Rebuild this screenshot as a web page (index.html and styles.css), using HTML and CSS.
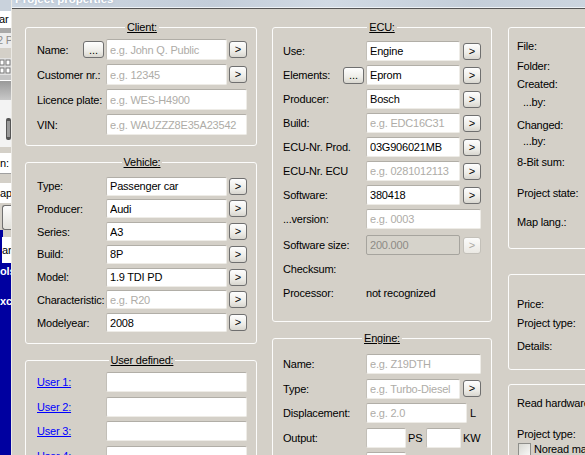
FILE: index.html
```html
<!DOCTYPE html>
<html>
<head>
	<meta charset="utf-8">
	<title>Project properties</title>
	<link rel="stylesheet" href="styles.css">
</head>
<body>

<div class="behind">
	<div class="bh-top"></div>
	<div class="bh-white bh-ar">ar</div>
	<div class="bh-line"></div>
	<div class="bh-light">2 P</div>
	<div class="bh-gap"></div>
	<div class="bh-icons">
		<svg width="11" height="17" viewBox="0 0 11 17">
			<rect x="0" y="2" width="4" height="5" fill="#fff" stroke="#777" stroke-width="1"/>
			<rect x="6" y="2" width="4" height="5" fill="#fff" stroke="#777" stroke-width="1"/>
			<rect x="0" y="10" width="4" height="5" fill="#fff" stroke="#777" stroke-width="1"/>
			<rect x="6" y="10" width="4" height="5" fill="#fff" stroke="#777" stroke-width="1"/>
		</svg>
	</div>
	<div class="bh-lines"></div>
	<div class="bh-dark"></div>
	<div class="bh-panel">
		<svg width="11" height="47" viewBox="0 0 11 47">
			<rect x="6" y="18" width="5" height="22" rx="2" fill="#555"/>
			<rect x="7" y="21" width="3" height="16" fill="#999"/>
		</svg>
	</div>
	<div class="bh-gap2"></div>
	<div class="bh-white bh-n">n:</div>
	<div class="bh-sep"></div>
	<div class="bh-white bh-ap">ap</div>
	<div class="bh-gap3"></div>
	<div class="bh-button"><div class="bh-btn"></div></div>
	<div class="bh-gap4"></div>
	<div class="bh-white bh-am">am</div>
	<div class="bh-blue"><b>ols</b><b class="bh-xc">xc</b></div>
</div>

<div class="dialog">
	<div class="titlebar"><span>Project properties</span></div>

	<div class="body">

		<div class="col col-left">
			<fieldset class="group client">
				<legend>Client:</legend>
				<div class="rows">
					<div class="row">
						<label>Name:</label>
						<button class="dots">...</button>
						<input class="short" placeholder="e.g. John Q. Public">
						<button class="pick">&gt;</button>
					</div>
					<div class="row">
						<label>Customer nr.:</label>
						<input class="short" placeholder="e.g. 12345">
						<button class="pick">&gt;</button>
					</div>
					<div class="row">
						<label>Licence plate:</label>
						<input class="wide" placeholder="e.g. WES-H4900">
					</div>
					<div class="row">
						<label>VIN:</label>
						<input class="wide" placeholder="e.g. WAUZZZ8E35A23542">
					</div>
				</div>
			</fieldset>

			<fieldset class="group vehicle">
				<legend>Vehicle:</legend>
				<div class="rows">
					<div class="row">
						<label>Type:</label>
						<input class="short" value="Passenger car">
						<button class="pick">&gt;</button>
					</div>
					<div class="row">
						<label>Producer:</label>
						<input class="short" value="Audi">
						<button class="pick">&gt;</button>
					</div>
					<div class="row">
						<label>Series:</label>
						<input class="short" value="A3">
						<button class="pick">&gt;</button>
					</div>
					<div class="row">
						<label>Build:</label>
						<input class="short" value="8P">
						<button class="pick">&gt;</button>
					</div>
					<div class="row">
						<label>Model:</label>
						<input class="short" value="1.9 TDI PD">
						<button class="pick">&gt;</button>
					</div>
					<div class="row">
						<label>Characteristic:</label>
						<input class="short" placeholder="e.g. R20">
						<button class="pick">&gt;</button>
					</div>
					<div class="row">
						<label>Modelyear:</label>
						<input class="short" value="2008">
						<button class="pick">&gt;</button>
					</div>
				</div>
			</fieldset>

			<fieldset class="group user">
				<legend>User defined:</legend>
				<div class="rows">
					<div class="row"><a href="#">User 1:</a><input class="wide"></div>
					<div class="row"><a href="#">User 2:</a><input class="wide"></div>
					<div class="row"><a href="#">User 3:</a><input class="wide"></div>
					<div class="row"><a href="#">User 4:</a><input class="wide"></div>
				</div>
			</fieldset>
		</div>

		<div class="col col-mid">
			<fieldset class="group ecu">
				<legend>ECU:</legend>
				<div class="rows">
					<div class="row">
						<label>Use:</label>
						<input class="short" value="Engine">
						<button class="pick">&gt;</button>
					</div>
					<div class="row">
						<label>Elements:</label>
						<button class="dots">...</button>
						<input class="short" value="Eprom">
						<button class="pick">&gt;</button>
					</div>
					<div class="row">
						<label>Producer:</label>
						<input class="short" value="Bosch">
						<button class="pick">&gt;</button>
					</div>
					<div class="row">
						<label>Build:</label>
						<input class="short" placeholder="e.g. EDC16C31">
						<button class="pick">&gt;</button>
					</div>
					<div class="row">
						<label>ECU-Nr. Prod.</label>
						<input class="short" value="03G906021MB">
						<button class="pick">&gt;</button>
					</div>
					<div class="row">
						<label>ECU-Nr. ECU</label>
						<input class="short" placeholder="e.g. 0281012113">
						<button class="pick">&gt;</button>
					</div>
					<div class="row">
						<label>Software:</label>
						<input class="short" value="380418">
						<button class="pick">&gt;</button>
					</div>
					<div class="row">
						<label>...version:</label>
						<input class="wide" placeholder="e.g. 0003">
					</div>
					<div class="row row-size">
						<label>Software size:</label>
						<input class="short" value="200.000" disabled>
						<button class="pick" disabled>&gt;</button>
					</div>
					<div class="row">
						<label>Checksum:</label>
					</div>
					<div class="row">
						<label>Processor:</label>
						<span class="value">not recognized</span>
					</div>
				</div>
			</fieldset>

			<fieldset class="group engine">
				<legend>Engine:</legend>
				<div class="rows">
					<div class="row">
						<label>Name:</label>
						<input class="wide" placeholder="e.g. Z19DTH">
					</div>
					<div class="row">
						<label>Type:</label>
						<input class="short" placeholder="e.g. Turbo-Diesel">
						<button class="pick">&gt;</button>
					</div>
					<div class="row">
						<label>Displacement:</label>
						<input class="disp" placeholder="e.g. 2.0">
						<span class="unit unit-l">L</span>
					</div>
					<div class="row">
						<label>Output:</label>
						<input class="ps">
						<span class="unit">PS</span>
						<input class="kw">
						<span class="unit">KW</span>
					</div>
					<div class="row">
						<label>Torque:</label>
						<input class="ps">
						<span class="fill"></span>
					</div>
				</div>
			</fieldset>
		</div>

		<div class="col col-right">
			<div class="info info-file">
				<div>File:</div>
				<div>Folder:</div>
				<div>Created:</div>
				<div class="sub">...by:</div>
				<div>Changed:</div>
				<div class="sub">...by:</div>
				<div>8-Bit sum:</div>
				<div>Project state:</div>
				<div>Map lang.:</div>
			</div>
			<div class="info info-price">
				<div>Price:</div>
				<div>Project type:</div>
				<div>Details:</div>
			</div>
			<div class="info info-read">
				<div>Read hardware:</div>
				<div>Project type:</div>
				<div class="check-row"><span class="check"></span>Noread marker</div>
			</div>
		</div>

	</div>
</div>

</body>
</html>
```

FILE: styles.css
```css
body {
	margin: 0;
	width: 585px;
	height: 455px;
	overflow: hidden;
	display: flex;
	background: #d4d0c8;
	font-family: "Liberation Sans", Arial, sans-serif;
	font-size: 11px;
	letter-spacing: -0.2px;
	color: #000;
}

/* window behind the dialog */
.behind {
	width: 11px;
	flex: none;
	display: flex;
	flex-direction: column;
	overflow: hidden;
	white-space: nowrap;
	line-height: 13px;
}

.behind > div {
	flex: none;
	overflow: hidden;
}

.bh-top { height: 11px; background: #c9d2dc; }
.bh-white { background: #fff; display: flex; align-items: center; }
.bh-ar { height: 17px; margin-left: -1px; }
.bh-line { height: 5px; background: #a9a9a9; }
.bh-light { height: 15px; background: #ececec; color: #8c8c8c; margin-left: -3px; display: flex; align-items: center; }
.bh-gap { height: 10px; background: #d4d0c8; }
.bh-icons { height: 17px; background: #e2e2e2; }
.bh-lines { height: 5px; background: #c4c4c4; border-bottom: 1px solid #fff; }
.bh-dark { height: 19px; background: linear-gradient(#9a9a9a, #c8c8c8); }
.bh-panel { height: 47px; background: #f3f3f3; }
.bh-gap2 { height: 6px; background: #d4d0c8; }
.bh-n { height: 20px; }
.bh-sep { height: 10px; background: #d4d0c8; border-top: 1px solid #a0a0a0; box-sizing: border-box; }
.bh-ap { height: 20px; }
.bh-gap3 { height: 2px; background: #d4d0c8; }
.bh-button { height: 25px; background: #d4d0c8; }
.bh-btn {
	height: 23px;
	margin-left: 2px;
	border: 1px solid #707070;
	border-right: none;
	border-radius: 3px 0 0 3px;
	background: linear-gradient(#fdfdfd, #e3e2dc);
}
.bh-gap4 { height: 7px; background: #d4d0c8; border-left: 3px solid #0000a0; }
.bh-am { height: 26px; border-left: 2px solid #0000a0; margin-left: 0; }
.bh-blue {
	flex: 1 !important;
	background: #0000a0;
	color: #fff;
	display: flex;
	flex-direction: column;
	padding-top: 2px;
}
.bh-xc { margin-top: 17px; }

/* dialog */
.dialog {
	flex: 1;
	min-width: 0;
	display: flex;
	flex-direction: column;
	border-left: 1px solid #eceae5;
	overflow: hidden;
}

.titlebar {
	height: 7px;
	flex: none;
	overflow: hidden;
	border-bottom: 1px solid #eef2f6;
	background: linear-gradient(90deg, #cdd7e2, #c3cdd9 35%, #d1dae4 55%, #c4ced9 80%, #ccd5df);
}

.titlebar span {
	display: block;
	margin: -7px 0 0 3px;
	line-height: 12px;
	font-size: 11.5px;
	font-weight: bold;
	letter-spacing: 0;
	color: #fff;
	text-shadow: 0 0 3px #9fb0c4;
}

.body {
	flex: 1;
	display: flex;
	align-items: flex-start;
	padding: 12px 0 0 13px;
	border-top: 1px solid #545454;
}

.col {
	flex: none;
	display: flex;
	flex-direction: column;
	gap: 10px;
}

.col-left { width: 232px; }
.col-mid { width: 220px; margin-left: 15px; }
.col-right { width: 140px; margin-left: 16px; gap: 0; }

/* group boxes */
fieldset.group {
	margin: 0;
	padding: 0 9px 10px 11px;
	border: 1px solid #fcfcfb;
	border-radius: 3px;
	min-width: 0;
}

fieldset.group legend {
	margin: 0 auto;
	padding: 0 2px;
	line-height: 13px;
	text-decoration: underline;
}

.rows {
	display: flex;
	flex-direction: column;
}

.row {
	display: flex;
	align-items: center;
	height: 20px;
}

.row label,
.row a {
	flex: 1;
	white-space: nowrap;
}

.row a {
	color: #0000ff;
	text-decoration: underline;
}

.client { padding-top: 5px !important; }
.client .rows { gap: 4px; }
.client .row { height: 21px; }

.vehicle { padding-top: 7.5px !important; padding-bottom: 11px !important; }
.vehicle .rows { gap: 3.8px; }
.vehicle .row { height: 19px; }

.user { margin-top: 1px; padding-top: 5px !important; }
.user .rows { gap: 4.6px; }

.ecu,
.engine {
	padding-left: 10px !important;
	padding-right: 10px !important;
}

.ecu { padding-top: 7px !important; padding-bottom: 18px !important; }
.ecu .rows { gap: 4px; }
.row-size { margin-top: 2px; }

.engine { padding-top: 9px !important; }
.engine .rows { gap: 4.5px; }

/* inputs */
input {
	box-sizing: border-box;
	height: 100%;
	margin: 0;
	padding: 0 3px;
	font: inherit;
	letter-spacing: inherit;
	color: #000;
	background: #fff;
	border: 1px solid;
	border-color: #b1aea7 #eeece7 #eeece7 #c2bfb8;
	border-radius: 2px;
	outline: none;
}

input::placeholder {
	color: #aeaca7;
}

input:disabled {
	background: #d6d3cb;
	border-color: #a6a49e;
	color: #8d8b86;
}

.col-left input.short { width: 121px; }
.col-left input.wide { width: 141px; }
.col-mid input.short { width: 94px; }
.col-mid input.wide { width: 115px; }

input.disp { width: 101px; }
input.ps { width: 40px; }
input.kw { width: 35px; }

.unit {
	margin-left: 2px;
	width: 18px;
}

.unit-l {
	margin-left: 3px;
	width: 11px;
}

.fill { flex: none; width: 75px; }

.value {
	width: 115px;
	white-space: nowrap;
}

/* buttons */
button {
	box-sizing: border-box;
	height: 17px;
	margin: 0;
	padding: 0;
	font: inherit;
	font-size: 11px;
	line-height: 13px;
	color: #000;
	border: 1px solid #6f6f6f;
	border-radius: 3px;
	background: linear-gradient(#fefefe, #eeede8 60%, #d8d6cf);
}

button.pick {
	width: 18px;
	margin-left: 2px;
}

.col-mid button.pick { margin-left: 3px; }

button.dots {
	width: 21px;
	margin-right: 2px;
	line-height: 10px;
}

button:disabled {
	color: #aaa8a2;
	border-color: #c3c0b9;
	background: linear-gradient(#fbfbfa, #ebe9e4);
}

/* right column info boxes */
.info {
	display: grid;
	line-height: 13px;
	padding: 12px 8px 19px 8px;
	border: 1px solid #fcfcfb;
	border-radius: 3px;
	white-space: nowrap;
}

.info-file {
	margin-top: 6px;
	grid-template-rows: 20px 18px 18px 23px 16px 21px 31px 29px 13px;
}

.info-price {
	margin-top: 25px;
	padding-top: 23px;
	padding-bottom: 16px;
	grid-template-rows: 19px 23px 13px;
}

.info-read {
	margin-top: 14px;
	padding-top: 12px;
	grid-template-rows: 31px 15px 13px;
}

.sub { padding-left: 6px; }

.check-row {
	display: flex;
	align-items: center;
	gap: 3px;
}

.check {
	box-sizing: border-box;
	width: 13px;
	height: 13px;
	margin-left: 1px;
	border: 1px solid #8e8e8a;
	background: linear-gradient(135deg, #d8d8d2, #f8f8f6);
}
```
